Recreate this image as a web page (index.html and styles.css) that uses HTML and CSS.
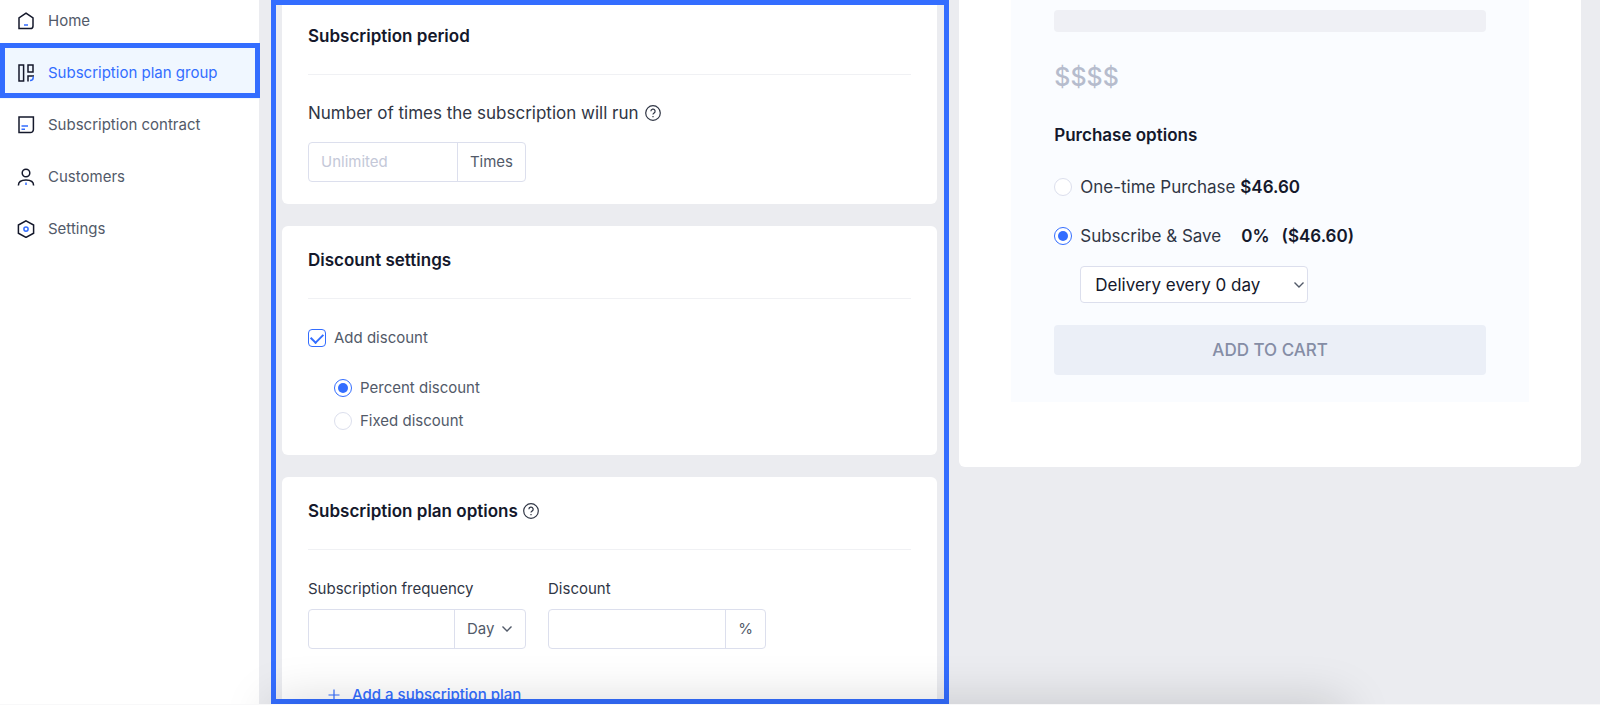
FILE: index.html
```
<!DOCTYPE html>
<html lang="en">
<head>
    <meta charset="UTF-8">
    <meta name="viewport" content="width=device-width, initial-scale=1.0">
    <title>Subscription plan group</title>
    <link rel="stylesheet" href="styles.css">
</head>
<body>
    <div class="page">
        <aside class="sidebar">
            <nav class="nav">
                <a href="#" class="nav-item">
                    <svg class="nav-icon" viewBox="0 0 18 18"><path d="M9 1.2 16 6v8a2.6 2.6 0 0 1-2.6 2.6H2V6z"/><path class="accent" d="M7 13h4"/></svg>
                    Home
                </a>
                <a href="#" class="nav-item active">
                    <svg class="nav-icon" viewBox="0 0 18 18"><path d="M2 1h4.6v16H2zM11 1h5v7h-5zM11 17.5V12h6"/><path class="accent" d="M16.2 12.4v1a3 3 0 0 1-3 3H13"/></svg>
                    Subscription plan group
                </a>
                <a href="#" class="nav-item">
                    <svg class="nav-icon" viewBox="0 0 18 18"><path d="M2 1h14.4v12.6a3 3 0 0 1-3 3H2z"/><path class="accent" d="M4.5 10H11M4.5 13.2H8"/></svg>
                    Subscription contract
                </a>
                <a href="#" class="nav-item">
                    <svg class="nav-icon" viewBox="0 0 18 18"><circle cx="9" cy="5" r="3.8"/><path d="M1.4 17.4c0-3.4 3-5.4 7.6-5.4s7.6 2 7.6 5.4"/><path class="accent" d="M9 14.6v2.4"/></svg>
                    Customers
                </a>
                <a href="#" class="nav-item">
                    <svg class="nav-icon" viewBox="0 0 18 18"><path d="M9 .8 16.6 5v8.2L9 17.4 1.4 13.2V5z"/><circle class="accent" cx="9" cy="9.1" r="2.1"/></svg>
                    Settings
                </a>
            </nav>
        </aside>

        <div class="content">
            <main class="settings">
                <section class="card">
                    <h2 class="card-title">Subscription period</h2>
                    <div class="field">
                        <label class="label-lg" for="times">Number of times the subscription will run
                            <svg class="help" viewBox="0 0 16 16"><circle cx="8" cy="8" r="7.3"/><path d="M5.9 6.3a2.1 2.1 0 1 1 3.1 1.8c-.7.4-1 .8-1 1.5M8 11v1.3"/></svg>
                        </label>
                        <div class="input-group">
                            <input type="text" id="times" placeholder="Unlimited">
                            <span class="addon">Times</span>
                        </div>
                    </div>
                </section>

                <section class="card">
                    <h2 class="card-title">Discount settings</h2>
                    <div class="discount">
                        <label class="option"><input type="checkbox" checked>Add discount</label>
                        <div class="discount-types">
                            <label class="option"><input type="radio" name="discount" checked>Percent discount</label>
                            <label class="option"><input type="radio" name="discount">Fixed discount</label>
                        </div>
                    </div>
                </section>

                <section class="card">
                    <h2 class="card-title">Subscription plan options
                        <svg class="help" viewBox="0 0 16 16"><circle cx="8" cy="8" r="7.3"/><path d="M5.9 6.3a2.1 2.1 0 1 1 3.1 1.8c-.7.4-1 .8-1 1.5M8 11v1.3"/></svg>
                    </h2>
                    <div class="plan">
                        <div class="plan-field">
                            <label for="frequency">Subscription frequency</label>
                            <div class="input-group">
                                <input type="text" id="frequency">
                                <div class="addon-select">
                                    <select aria-label="Frequency unit"><option>Day</option><option>Week</option><option>Month</option></select>
                                    <svg class="chevron" viewBox="0 0 12 12"><path d="M1.5 3.5 6 8l4.5-4.5"/></svg>
                                </div>
                            </div>
                        </div>
                        <div class="plan-field">
                            <label for="discount">Discount</label>
                            <div class="input-group">
                                <input type="text" id="discount">
                                <span class="addon">%</span>
                            </div>
                        </div>
                    </div>
                    <button type="button" class="add-plan">
                        <svg class="plus" viewBox="0 0 12 12"><path d="M6 .5v11M.5 6h11"/></svg>
                        Add a subscription plan
                    </button>
                </section>
            </main>

            <section class="preview">
                <div class="product">
                    <div class="skeleton"></div>
                    <p class="price">$$$$</p>
                    <h3 class="product-title">Purchase options</h3>
                    <label class="purchase"><input type="radio" name="purchase"><span>One-time Purchase <b>$46.60</b></span></label>
                    <label class="purchase"><input type="radio" name="purchase" checked><span>Subscribe &amp; Save</span><b class="percent">0%</b><b>($46.60)</b></label>
                    <div class="delivery">
                        <select aria-label="Delivery"><option>Delivery every 0 day</option></select>
                        <svg class="chevron" viewBox="0 0 12 12"><path d="M1.5 3.5 6 8l4.5-4.5"/></svg>
                    </div>
                    <button type="button" class="add-to-cart">ADD TO CART</button>
                </div>
            </section>
        </div>
        <div class="bottom-shadow"></div>
    </div>
</body>
</html>
```

FILE: styles.css
```
:root {
    --primary: #336dff;
    --text: #14182b;
    --text-2: #525a69;
    --text-3: #303645;
    --border: #dcdfed;
    --bg: #ebecf0;
}

* {
    margin: 0;
    padding: 0;
    box-sizing: border-box;
}

body {
    font-family: Inter, "Liberation Sans", sans-serif;
    font-size: 15px;
    line-height: 20px;
    color: var(--text-2);
    background: #fff;
}

input,
select,
button {
    font: inherit;
    color: inherit;
}

.page {
    position: relative;
    display: flex;
    height: 100vh;
    overflow: hidden;
    background: var(--bg);
    border-bottom: 1px solid #f8f8f9;
}

/* Sidebar */
.sidebar {
    flex: 0 0 259px;
    background: #fff;
}

.nav {
    margin-top: -5px;
}

.nav-item {
    position: relative;
    display: flex;
    align-items: center;
    gap: 13px;
    height: 52px;
    padding-left: 17px;
    color: var(--text-2);
    text-decoration: none;
}

.nav-item.active {
    color: var(--primary);
    background: #f0f7ff;
}

.nav-item.active::after {
    content: "";
    position: absolute;
    inset: -4px -1px 1px 0;
    border: 5px solid var(--primary);
}

.nav-icon {
    width: 18px;
    height: 18px;
    fill: none;
    stroke: #14182b;
    stroke-width: 1.5;
}

.nav-icon .accent {
    stroke: var(--primary);
}

/* Settings column */
.content {
    flex: 1;
    display: grid;
    grid-template-columns: 12fr 11fr;
    gap: 10px;
    padding: 0 19px 0 12px;
    min-width: 0;
}

.settings {
    position: relative;
    height: calc(100vh - 1px);
    padding: 0 7px 0 6px;
    border: 5px solid var(--primary);
    overflow: hidden;
}

.card {
    padding: 22px 26px;
    margin-bottom: 22px;
    background: #fff;
    border-radius: 6px;
}

.card:first-child {
    padding-top: 19px;
    border-radius: 0 0 6px 6px;
}

.card-title {
    display: flex;
    align-items: center;
    gap: 5px;
    padding-bottom: 26px;
    border-bottom: 1px solid #f0f1f4;
    font-size: 17px;
    line-height: 24px;
    font-weight: 600;
    color: var(--text);
}

.help {
    width: 16px;
    height: 16px;
    fill: none;
    stroke: var(--text-3);
    stroke-width: 1.2;
}

.field {
    padding-top: 26px;
}

.label-lg {
    display: flex;
    align-items: center;
    gap: 6px;
    margin-bottom: 17px;
    font-size: 17px;
    line-height: 24px;
    color: var(--text-3);
}

.input-group {
    display: flex;
    width: 218px;
    height: 40px;
    border: 1px solid var(--border);
    border-radius: 4px;
}

.input-group input {
    flex: 1;
    min-width: 0;
    padding: 0 12px;
    border: none;
    background: none;
    outline: none;
}

.input-group input::placeholder {
    color: #c4c8d8;
}

.addon,
.addon-select {
    display: flex;
    align-items: center;
    padding: 0 12px;
    border-left: 1px solid var(--border);
}

.addon-select {
    gap: 6px;
}

select {
    appearance: none;
    border: none;
    background: none;
    outline: none;
}

.addon-select select {
    width: 28px;
}

.chevron {
    width: 12px;
    height: 12px;
    fill: none;
    stroke: var(--text-2);
    stroke-width: 1.4;
    pointer-events: none;
}

/* Discount options */
.discount {
    padding: 29px 0 2px;
}

.option,
.purchase {
    display: flex;
    align-items: center;
    gap: 8px;
}

.discount-types {
    display: grid;
    gap: 13px;
    padding: 30px 0 0 26px;
}

input[type="checkbox"],
input[type="radio"] {
    appearance: none;
    display: grid;
    place-items: center;
    flex: none;
    width: 18px;
    height: 18px;
    border: 1px solid var(--border);
    border-radius: 50%;
    background: #fff;
}

input[type="checkbox"] {
    border-radius: 4px;
}

input[type="checkbox"]:checked,
input[type="radio"]:checked {
    border-color: var(--primary);
}

input[type="radio"]:checked::before {
    content: "";
    width: 10px;
    height: 10px;
    border-radius: 50%;
    background: var(--primary);
}

input[type="checkbox"]:checked::before {
    content: "";
    width: 10px;
    height: 6px;
    margin-bottom: 3px;
    border: solid var(--primary);
    border-width: 0 0 2px 2px;
    transform: rotate(-45deg);
}

/* Plan options */
.plan {
    display: flex;
    gap: 22px;
    padding-top: 29px;
}

.plan-field label {
    display: block;
    margin-bottom: 10px;
    color: var(--text-3);
}

.add-plan {
    display: flex;
    align-items: center;
    gap: 12px;
    margin: 34px 0 0 20px;
    border: none;
    background: none;
    font-weight: 500;
    line-height: 24px;
    color: var(--primary);
}

.plus {
    width: 12px;
    height: 12px;
    fill: none;
    stroke: var(--primary);
    stroke-width: 1.2;
}

/* Preview column */
.preview {
    align-self: start;
    padding: 0 52px 65px;
    background: #fff;
    border-radius: 0 0 6px 6px;
}

.product {
    padding: 10px 43px 27px;
    background: #fafcff;
    font-size: 17px;
    line-height: 24px;
    color: var(--text-3);
}

.skeleton {
    height: 22px;
    border-radius: 4px;
    background: #eff0f5;
}

.price {
    margin: 29px 0 30px;
    font-size: 25px;
    line-height: 32px;
    font-weight: 500;
    color: #b6bccd;
}

.product-title {
    margin-bottom: 28px;
    font-size: 17px;
    font-weight: 600;
    color: var(--text);
}

.purchase + .purchase {
    margin-top: 25px;
}

.purchase b {
    font-weight: 600;
    color: var(--text);
}

.purchase .percent {
    margin: 0 4px 0 12px;
}

.delivery {
    display: grid;
    align-items: center;
    width: 228px;
    margin: 18px 0 22px 26px;
    color: var(--text);
}

.delivery select,
.delivery .chevron {
    grid-area: 1 / 1;
}

.delivery select {
    height: 37px;
    padding: 0 14px;
    border: 1px solid var(--border);
    border-radius: 4px;
    background: #fff;
}

.delivery .chevron {
    justify-self: end;
    margin-right: 3px;
}

.add-to-cart {
    display: block;
    width: 100%;
    height: 50px;
    border: none;
    border-radius: 4px;
    background: #ebeff7;
    font-weight: 500;
    color: #858da5;
}

/* Shadow rising from the bottom edge */
.bottom-shadow {
    position: absolute;
    left: 17%;
    right: 16%;
    bottom: -40px;
    height: 40px;
    box-shadow: 0 0 50px rgba(0, 0, 0, 0.18);
    pointer-events: none;
}
```
